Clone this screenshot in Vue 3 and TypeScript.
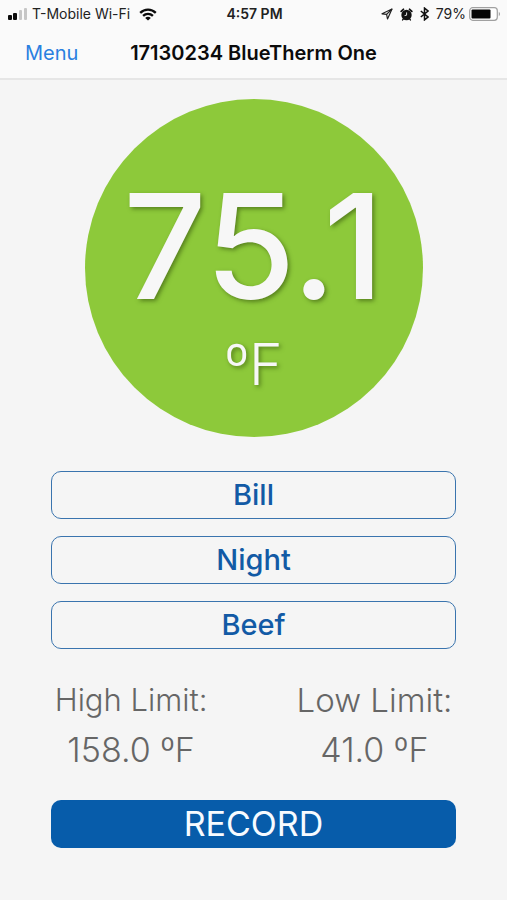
<script setup lang="ts">
import { ref } from 'vue'

interface Limit {
  id: string
  label: string
  value: string
}

const deviceName = '17130234 BlueTherm One'
const reading = ref('75.1')
const unit = 'ºF'
const tags = ref<string[]>(['Bill', 'Night', 'Beef'])
const limits = ref<Limit[]>([
  { id: 'high', label: 'High Limit:', value: '158.0 ºF' },
  { id: 'low', label: 'Low Limit:', value: '41.0 ºF' },
])
const battery = 79
</script>

<template>
  <div class="screen">
    <header class="top">
      <div class="status">
        <div class="status-left">
          <svg class="signal" width="20" height="12" viewBox="0 0 20 12" aria-hidden="true">
            <rect x="0" y="7" width="4" height="5" rx="1" fill="#0b0b0b" />
            <rect x="5" y="5" width="4" height="7" rx="1" fill="#0b0b0b" />
            <rect x="11" y="2" width="3" height="10" rx="1" fill="#c6c6c6" />
            <rect x="16" y="0" width="3" height="12" rx="1" fill="#c6c6c6" />
          </svg>
          <span>T-Mobile Wi-Fi</span>
          <svg class="wifi" width="18" height="13" viewBox="0 0 18 13" fill="none" stroke="#0b0b0b" stroke-width="2.3" aria-hidden="true">
            <path d="M1.2 4.9C5.6 0.4 12.4 0.4 16.8 4.9" />
            <path d="M4.1 7.9C6.9 5.1 11.1 5.1 13.9 7.9" />
            <path d="M9 12.6L6.2 9.9C7.8 8.4 10.2 8.4 11.8 9.9Z" fill="#0b0b0b" stroke="none" />
          </svg>
        </div>
        <span class="clock">4:57 PM</span>
        <div class="status-right">
          <svg width="12" height="12" viewBox="0 0 12 12" fill="none" stroke="#222" stroke-width="1.2" stroke-linejoin="round" aria-hidden="true">
            <path d="M11 1L1 5.8L5.6 6.4L6.5 11Z" />
            <path d="M11 1L5.6 6.4" />
          </svg>
          <svg class="alarm" width="13" height="13" viewBox="0 0 13 13" fill="none" stroke="#111" stroke-linecap="round" aria-hidden="true">
            <circle cx="6.5" cy="7" r="5.2" fill="#111" stroke="none" />
            <path d="M1.2 3.3L3.4 1.3M11.8 3.3L9.6 1.3" stroke-width="1.8" />
            <path d="M3.2 11.2L2.6 11.9M9.8 11.2L10.4 11.9" stroke-width="1.4" />
            <path d="M6.6 4.8V7.2L5 7.5" stroke="#fafafa" stroke-width="0.9" />
          </svg>
          <svg class="bluetooth" width="9" height="14" viewBox="0 0 9 14" fill="none" stroke="#111" stroke-width="1.5" stroke-linejoin="miter" aria-hidden="true">
            <path d="M0.8 4L8 10L4.5 12.9V1.1L8 4L0.8 10" />
          </svg>
          <span>{{ battery }}%</span>
          <svg class="battery" width="32" height="14" viewBox="0 0 32 14" aria-hidden="true">
            <rect x="0.7" y="0.7" width="27.6" height="12.6" rx="3" fill="#fff" stroke="#a0a0a0" stroke-width="1.2" />
            <rect x="2.5" y="2.5" width="19" height="9" rx="1" fill="#050505" />
            <path d="M29.8 4.8C31.4 5.5 31.4 8.5 29.8 9.2Z" fill="#a0a0a0" />
          </svg>
        </div>
      </div>
      <nav class="bar">
        <a class="menu" href="#menu">Menu</a>
        <h1 class="title">{{ deviceName }}</h1>
      </nav>
    </header>

    <main class="content">
      <section class="dial" aria-label="Temperature">
        <span class="reading">{{ reading }}</span>
        <span class="unit">{{ unit }}</span>
      </section>

      <div class="tags">
        <button v-for="tag in tags" :key="tag" type="button" class="tag">{{ tag }}</button>
      </div>

      <dl class="limits">
        <div v-for="limit in limits" :key="limit.id" class="limit" :class="limit.id">
          <dt>{{ limit.label }}</dt>
          <dd>{{ limit.value }}</dd>
        </div>
      </dl>

      <button type="button" class="record">RECORD</button>
    </main>
  </div>
</template>

<style>
body {
  background: #f5f5f5;
}
</style>

<style scoped>
.screen {
  min-height: 100vh;
  background: #f5f5f5;
  font-family: Inter, 'Liberation Sans', sans-serif;
  color: #0b0b0b;
}

.top {
  background: #fafafa;
  border-bottom: 2px solid #e6e6e6;
}

.status {
  display: grid;
  grid-template-columns: 1fr auto 1fr;
  align-items: center;
  height: 28px;
  padding: 0 6px 0 8px;
  font-size: 14px;
  line-height: 28px;
  color: #222;
}

.status-left,
.status-right {
  display: flex;
  align-items: center;
  white-space: nowrap;
}

.status-left {
  gap: 4px;
}

.wifi {
  margin-left: 5px;
}

.status-right {
  justify-content: flex-end;
  gap: 7px;
}

.battery {
  margin-left: -4px;
}

.clock {
  font-weight: 600;
}

.bar {
  display: grid;
  grid-template-columns: 1fr auto 1fr;
  align-items: center;
  height: 50px;
  padding: 0 25px;
}

.menu {
  color: #2a80e0;
  font-size: 20px;
  line-height: 24px;
  text-decoration: none;
}

.title {
  margin: 0;
  font-size: 20px;
  line-height: 24px;
  font-weight: 600;
  white-space: nowrap;
}

.content {
  display: flex;
  flex-direction: column;
  padding: 19px 10% 52px;
}

.dial {
  align-self: center;
  display: flex;
  flex-direction: column;
  align-items: center;
  box-sizing: border-box;
  width: 338px;
  max-width: 100%;
  aspect-ratio: 1;
  padding-top: 76px;
  border-radius: 50%;
  background: #8dc93a;
  color: #f7f7f7;
  text-shadow: 2px 2px 4px rgba(50, 80, 10, 0.6);
}

.reading {
  font-size: 146px;
  line-height: 142px;
  font-weight: 500;
}

.unit {
  margin-top: 12px;
  font-size: 57px;
  line-height: 72px;
  font-weight: 300;
}

.tags {
  display: flex;
  flex-direction: column;
  gap: 17px;
  margin-top: 34px;
}

.tag,
.record {
  box-sizing: border-box;
  width: 100%;
  height: 48px;
  padding: 0;
  border-radius: 10px;
  font-family: inherit;
  font-weight: 500;
  cursor: pointer;
}

.tag {
  border: 1px solid #3a74ae;
  background: transparent;
  color: #125aa5;
  font-size: 29px;
  line-height: 46px;
}

.limits {
  display: flex;
  justify-content: space-between;
  margin: 26px 0 0;
  padding: 0 4px;
  color: #666;
  font-weight: 300;
  text-align: center;
}

.limit dt {
  font-size: 31px;
  line-height: 50px;
}

.limit.low dt {
  font-size: 33px;
}

.limit dd {
  margin: 0;
  font-size: 34px;
  line-height: 50px;
}

.record {
  margin-top: 25px;
  border: 0;
  background: #075caa;
  color: #f7fbff;
  font-size: 34px;
  font-weight: 400;
  line-height: 48px;
}
</style>
